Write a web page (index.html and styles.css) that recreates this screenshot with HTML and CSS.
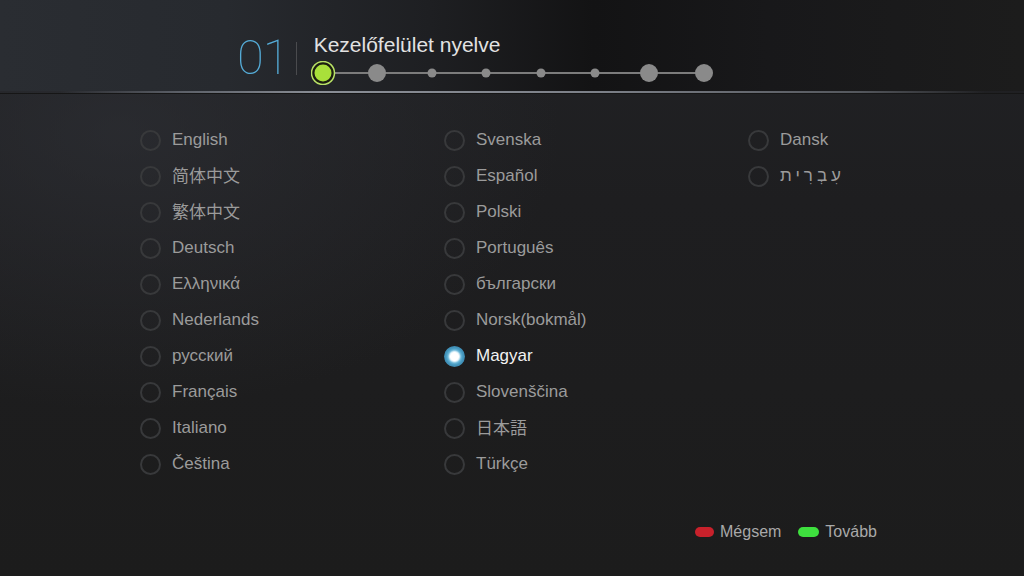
FILE: index.html
```html
<!DOCTYPE html>
<html lang="hu">
<head>
<meta charset="utf-8">
<title>Kezelőfelület nyelve</title>
<link rel="stylesheet" href="styles.css">
</head>
<body>
<div class="screen">
  <header class="header">
    <div class="num">01</div>
    <div class="sep"></div>
    <div class="titlebox">
      <div class="title">Kezelőfelület nyelve</div>
      <svg class="stepper" width="410" height="24" viewBox="0 0 410 24">
        <line x1="12" y1="12" x2="393" y2="12" stroke="#7c7c7c" stroke-width="2"/>
        <circle cx="12" cy="12" r="11.5" fill="#1b1d10" stroke="#b9e266" stroke-width="1.5"/>
        <circle cx="12" cy="12" r="8.5" fill="#a9e03a"/>
        <circle cx="66" cy="12" r="9" fill="#8a8a8a"/>
        <circle cx="121" cy="12" r="4.5" fill="#8a8a8a"/>
        <circle cx="175" cy="12" r="4.5" fill="#8a8a8a"/>
        <circle cx="230" cy="12" r="4.5" fill="#8a8a8a"/>
        <circle cx="284" cy="12" r="4.5" fill="#8a8a8a"/>
        <circle cx="338" cy="12" r="9" fill="#8a8a8a"/>
        <circle cx="393" cy="12" r="9" fill="#8a8a8a"/>
      </svg>
    </div>
  </header>
  <div class="rule"></div>
  <main class="grid">
    <div class="item"><span class="radio"></span><span class="label">English</span></div>
    <div class="item"><span class="radio"></span><span class="label cjk">简体中文</span></div>
    <div class="item"><span class="radio"></span><span class="label cjk">繁体中文</span></div>
    <div class="item"><span class="radio"></span><span class="label">Deutsch</span></div>
    <div class="item"><span class="radio"></span><span class="label">Ελληνικά</span></div>
    <div class="item"><span class="radio"></span><span class="label">Nederlands</span></div>
    <div class="item"><span class="radio"></span><span class="label">русский</span></div>
    <div class="item"><span class="radio"></span><span class="label">Français</span></div>
    <div class="item"><span class="radio"></span><span class="label">Italiano</span></div>
    <div class="item"><span class="radio"></span><span class="label">Čeština</span></div>
    <div class="item"><span class="radio"></span><span class="label">Svenska</span></div>
    <div class="item"><span class="radio"></span><span class="label">Español</span></div>
    <div class="item"><span class="radio"></span><span class="label">Polski</span></div>
    <div class="item"><span class="radio"></span><span class="label">Português</span></div>
    <div class="item"><span class="radio"></span><span class="label">български</span></div>
    <div class="item"><span class="radio"></span><span class="label">Norsk(bokmål)</span></div>
    <div class="item selected"><span class="radio"></span><span class="label">Magyar</span></div>
    <div class="item"><span class="radio"></span><span class="label">Slovenščina</span></div>
    <div class="item"><span class="radio"></span><span class="label cjp">日本語</span></div>
    <div class="item"><span class="radio"></span><span class="label">Türkçe</span></div>
    <div class="item"><span class="radio"></span><span class="label">Dansk</span></div>
    <div class="item"><span class="radio"></span><span class="label heb">עִבְרִית</span></div>
  </main>
  <footer class="footer">
    <span class="key red"></span><span class="keytext">Mégsem</span>
    <span class="key green"></span><span class="keytext">Tovább</span>
  </footer>
</div>
</body>
</html>
```
FILE: styles.css
```css
html, body {
  margin: 0;
  padding: 0;
  background: #1c1c1c;
}
.screen {
  width: 1024px;
  height: 576px;
  overflow: hidden;
  position: relative;
  font-family: "Liberation Sans", Arial, sans-serif;
  background:
    radial-gradient(ellipse 440px 280px at 120px 130px, rgba(48,50,56,0.6), rgba(48,50,56,0) 100%),
    linear-gradient(180deg, #212225 0px, #1e1e20 200px, #1c1c1c 576px);
}
.header {
  height: 91px;
  display: flex;
  align-items: flex-start;
  padding-left: 237px;
  box-sizing: border-box;
  background:
    linear-gradient(90deg, #2a2d32 0%, #272a2f 22%, #1e1f22 42%, #131314 58%, #18181a 75%, #1c1c1c 100%);
}
.num {
  font-family: Roboto, "Liberation Sans", sans-serif;
  font-weight: 100;
  font-size: 49px;
  line-height: 49px;
  margin-top: 33px;
  color: #55acd8;
  letter-spacing: -1px;
}
.sep {
  width: 1px;
  height: 33px;
  margin-top: 42px;
  margin-left: 7px;
  background: #4a4b4e;
}
.titlebox {
  margin-left: 14px;
  margin-top: 35px;
}
.title {
  font-size: 21px;
  line-height: 20px;
  padding-left: 3px;
  color: #e2e2e2;
}
.stepper {
  display: block;
  margin-top: 6px;
}
.rule {
  height: 2px;
  background: linear-gradient(90deg, rgba(120,124,132,0) 60px, #5c6068 180px, #8a8e96 320px, #7c8088 600px, #54575d 860px, rgba(80,82,86,0) 985px);
  border-bottom: 1px solid #161616;
}
.grid {
  display: grid;
  grid-template-columns: 304px 304px 1fr;
  grid-template-rows: repeat(10, 36px);
  grid-auto-flow: column;
  padding-left: 140px;
  padding-top: 28px;
}
.item {
  display: flex;
  align-items: center;
  gap: 11px;
}
.radio {
  width: 17px;
  height: 17px;
  border-radius: 50%;
  border: 2px solid #38393b;
  flex: none;
}
.label {
  font-size: 17px;
  color: #9b9b9b;
  white-space: nowrap;
}
.cjk {
  font-family: "Noto Sans CJK SC", sans-serif;
  margin-bottom: 4px;
}
.cjp {
  font-family: "Noto Sans CJK JP", sans-serif;
  margin-bottom: 4px;
}
.heb {
  font-family: "Liberation Sans", "DejaVu Sans", sans-serif;
  letter-spacing: 4px;
}
.selected .radio {
  width: 21px;
  height: 21px;
  border: none;
  background: radial-gradient(circle, #ffffff 0 4px, #d6eef8 5px, #6db7d8 6.5px, #4a9ec4 8px, #3b86ad 10.5px, rgba(59,134,173,0) 11px);
}
.selected .label {
  color: #f2f2f2;
}
.footer {
  display: flex;
  align-items: center;
  height: 20px;
  margin-top: 40px;
  padding-left: 695px;
}
.key {
  width: 19px;
  height: 10px;
  border-radius: 5px;
  flex: none;
}
.key.red {
  background: #c8212b;
}
.key.green {
  background: #3ee03e;
  width: 21px;
  margin-left: 17px;
}
.keytext {
  font-size: 16px;
  color: #a9a9a9;
  margin-left: 6px;
}
```
